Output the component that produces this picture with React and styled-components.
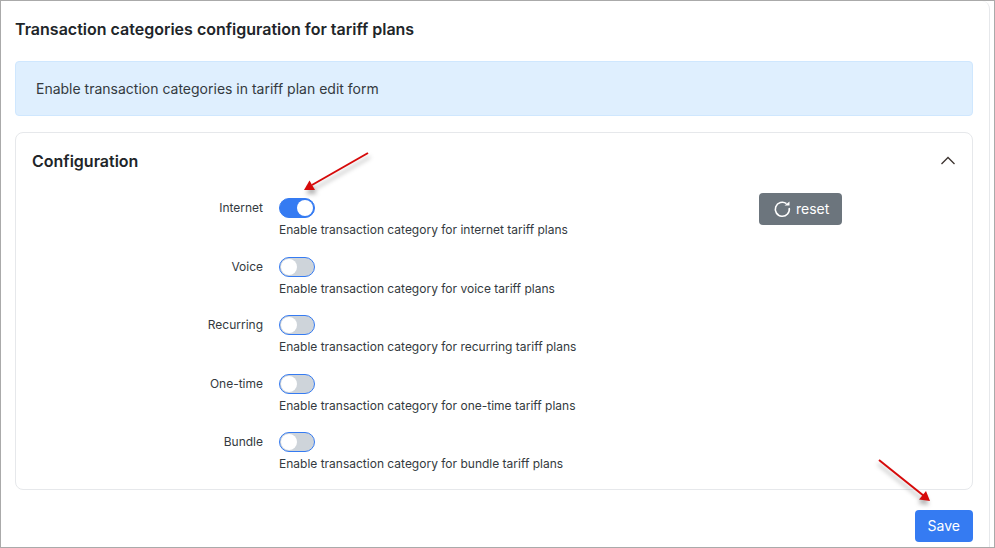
import React, { useState } from 'react';
import styled, { createGlobalStyle } from 'styled-components';

const GlobalStyle = createGlobalStyle`
  *, *::before, *::after { box-sizing: border-box; }
  body {
    margin: 0;
    background: #fff;
    color: #212529;
    font-family: Inter, "Liberation Sans", sans-serif;
  }
`;

const Frame = styled.div`
  display: flex;
  min-height: 100vh;
  padding-right: 4px;
  border: 1px solid #aaa;
`;

const Panel = styled.main`
  flex: 1;
  min-width: 0;
  padding: 16px 16px 4px 14px;
  border-right: 1px solid #e6e8eb;
  border-top-right-radius: 8px;
`;

const Title = styled.h1`
  margin: 0 0 20px;
  font-size: 16px;
  font-weight: 600;
  line-height: 24px;
`;

const Notice = styled.div`
  margin-bottom: 16px;
  padding: 14px 20px;
  border: 1px solid #cfe7fe;
  border-radius: 4px;
  background: #dfeffe;
  color: #343a40;
  font-size: 14px;
  line-height: 25px;
`;

const Card = styled.section`
  margin-bottom: 20px;
  padding: 16px;
  border: 1px solid #e6e8eb;
  border-radius: 8px;
`;

const CardHeader = styled.header`
  display: flex;
  align-items: center;
  justify-content: space-between;
  margin-bottom: 20px;
`;

const CardTitle = styled.h2`
  margin: 0;
  font-size: 16px;
  font-weight: 600;
  line-height: 24px;
`;

const CollapseButton = styled.button`
  display: flex;
  padding: 0;
  border: 0;
  background: none;
  color: #3d3430;
  cursor: pointer;
`;

const Rows = styled.div`
  display: flex;
  flex-direction: column;
  justify-content: space-between;
  min-height: 280px;
`;

const Row = styled.div`
  display: grid;
  grid-template-columns: minmax(0, 25%) minmax(0, 1fr) 197px;
  column-gap: 16px;
  align-items: start;
  height: 46px;
`;

const RowLabel = styled.label`
  padding-top: 5px;
  color: #343a40;
  font-size: 12px;
  line-height: 20px;
  text-align: right;
`;

const Field = styled.div`
  position: relative;
  padding-top: 5px;
`;

const Switch = styled.input`
  appearance: none;
  display: flex;
  align-items: center;
  width: 36px;
  height: 20px;
  margin: 0;
  padding: 0 1px;
  border: 1px solid #357bf2;
  border-radius: 10px;
  background: #ced4da;
  cursor: pointer;

  &::before {
    content: "";
    width: 16px;
    height: 16px;
    border-radius: 50%;
    background: #fff;
  }

  &:checked {
    justify-content: flex-end;
    background: #357bf2;
  }
`;

const Hint = styled.p`
  margin: 2px 0 0;
  color: #343a40;
  font-size: 12px;
  line-height: 20px;
`;

const Button = styled.button`
  display: inline-flex;
  align-items: center;
  justify-self: start;
  gap: 4px;
  height: 32px;
  padding: 0 13px;
  border: 0;
  border-radius: 4px;
  background: ${({ $tone }) => ($tone === 'primary' ? '#357bf2' : '#6c757d')};
  color: #fff;
  font: 400 14px/20px Inter, "Liberation Sans", sans-serif;
  cursor: pointer;
`;

const Actions = styled.footer`
  position: relative;
  display: flex;
  justify-content: flex-end;
`;

const SwitchArrow = styled.svg`
  position: absolute;
  top: -43px;
  left: 21px;
  pointer-events: none;
  filter: drop-shadow(2px 4px 2px rgba(0, 0, 0, 0.3));
`;

const SaveArrow = styled.svg`
  position: absolute;
  top: -53px;
  right: 40px;
  pointer-events: none;
  filter: drop-shadow(-1px 4px 2px rgba(0, 0, 0, 0.3));
`;

const CATEGORIES = [
  { id: 'internet', label: 'Internet', on: true },
  { id: 'voice', label: 'Voice', on: false },
  { id: 'recurring', label: 'Recurring', on: false },
  { id: 'one-time', label: 'One-time', on: false },
  { id: 'bundle', label: 'Bundle', on: false },
];

const DEFAULTS = Object.fromEntries(CATEGORIES.map(({ id, on }) => [id, on]));

export default function App() {
  const [values, setValues] = useState(DEFAULTS);
  const [open, setOpen] = useState(true);

  const toggle = (id) => setValues((prev) => ({ ...prev, [id]: !prev[id] }));

  return (
    <>
      <GlobalStyle />
      <Frame>
        <Panel>
          <Title>Transaction categories configuration for tariff plans</Title>
          <Notice>Enable transaction categories in tariff plan edit form</Notice>
          <Card>
            <CardHeader>
              <CardTitle>Configuration</CardTitle>
              <CollapseButton
                type="button"
                aria-label="Toggle configuration"
                aria-expanded={open}
                onClick={() => setOpen(!open)}
              >
                <svg width="16" height="16" viewBox="0 0 16 16" fill="none" stroke="currentColor" strokeWidth="1.3">
                  <path d={open ? 'M1.5 11L8 4.5L14.5 11' : 'M1.5 5L8 11.5L14.5 5'} />
                </svg>
              </CollapseButton>
            </CardHeader>
            {open && (
              <Rows>
                {CATEGORIES.map(({ id, label }) => (
                  <Row key={id}>
                    <RowLabel htmlFor={id}>{label}</RowLabel>
                    <Field>
                      <Switch
                        id={id}
                        type="checkbox"
                        role="switch"
                        aria-describedby={`${id}-hint`}
                        checked={values[id]}
                        onChange={() => toggle(id)}
                      />
                      <Hint id={`${id}-hint`}>Enable transaction category for {id} tariff plans</Hint>
                      {id === 'internet' && (
                        <SwitchArrow width="72" height="42" viewBox="0 0 72 42" aria-hidden="true">
                          <path d="M68 3L12 35" stroke="#d60a0a" strokeWidth="2" />
                          <path d="M4 40L9.500 30.500L15 40Z" fill="#d60a0a" />
                        </SwitchArrow>
                      )}
                    </Field>
                    {id === 'internet' && (
                      <Button type="button" onClick={() => setValues(DEFAULTS)}>
                        <svg width="20" height="20" viewBox="0 0 20 20" fill="none" stroke="currentColor" strokeWidth="1.6" aria-hidden="true">
                          <path d="M17.200 9A7 7 0 1 1 14.500 4.700" />
                          <path d="M12.500 6.500H17.500V2.500Z" fill="currentColor" stroke="none" />
                        </svg>
                        reset
                      </Button>
                    )}
                  </Row>
                ))}
              </Rows>
            )}
          </Card>
          <Actions>
            <Button type="button" $tone="primary">Save</Button>
            <SaveArrow width="60" height="48" viewBox="0 0 60 48" aria-hidden="true">
              <path d="M6 3L51 39" stroke="#d60a0a" strokeWidth="2" />
              <path d="M57 44L46 42.500L53 34Z" fill="#d60a0a" />
            </SaveArrow>
          </Actions>
        </Panel>
      </Frame>
    </>
  );
}
